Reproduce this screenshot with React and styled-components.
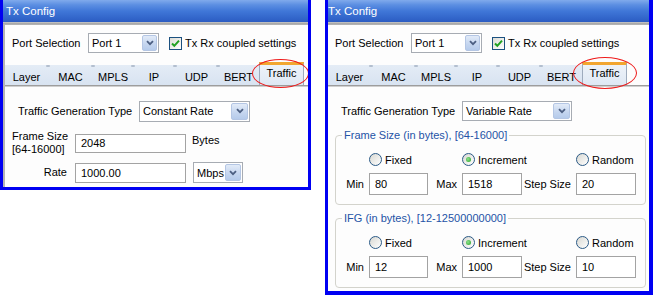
import React from 'react'
import styled, { createGlobalStyle } from 'styled-components'

const GlobalStyle = createGlobalStyle`
  html, body {
    margin: 0;
    padding: 0;
    background: #ffffff;
  }
  body {
    font-family: "Liberation Sans", Arial, sans-serif;
    font-size: 11px;
    color: #000;
  }
`

const Page = styled.div`
  display: flex;
  align-items: flex-start;
  gap: 14px;
  width: 653px;
  height: 296px;
  overflow: hidden;
`

const Window = styled.div`
  box-sizing: border-box;
  flex: none;
  width: ${p => p.$w}px;
  height: ${p => p.$h}px;
  border: 3px solid #0000f2;
  border-top: 0;
  border-right-width: ${p => p.$right}px;
  border-bottom-width: ${p => p.$bottom}px;
  display: flex;
  flex-direction: column;
  background: #fdfdfd;
  overflow: hidden;
`

const TitleBar = styled.div`
  flex: none;
  height: 22px;
  display: flex;
  align-items: center;
  padding-left: ${p => p.$pad}px;
  color: #ffffff;
  font-size: 11.5px;
  background: linear-gradient(#80aaec 0%, #5c8fe2 22%, #4077d8 50%, #3468cc 78%, #2b5cc2 100%);
`

const Separator = styled.div`
  flex: none;
  height: 3px;
  background: linear-gradient(#c9c9c9, #a3a3a3 60%, #bdbdbd);
`

const Body = styled.div`
  flex: 1;
  display: flex;
  flex-direction: column;
  padding-top: 8px;
  border-left: ${p => p.$gutter}px solid #b4b4b4;
`

const PortRow = styled.div`
  display: flex;
  align-items: center;
  height: 20px;
  padding-left: 7px;
`

const PortLabel = styled.span`
  width: 76px;
  flex: none;
`

const SelectBox = styled.div`
  box-sizing: border-box;
  flex: none;
  width: ${p => p.$w}px;
  height: ${p => p.$h}px;
  margin-left: ${p => p.$ml || 0}px;
  border: 1px solid #a7acb3;
  background: #ffffff;
  display: flex;
  padding: 1px;
`

const SelectText = styled.span`
  flex: 1;
  display: flex;
  align-items: center;
  padding-left: 2px;
  white-space: nowrap;
  overflow: hidden;
`

const DropButton = styled.span`
  box-sizing: border-box;
  flex: none;
  width: ${p => p.$w}px;
  display: flex;
  align-items: center;
  justify-content: center;
  background: linear-gradient(#e2ebf8, #c4d5ef 60%, #b5cbeb);
  border: 1px solid #b4c6e4;
  border-radius: 2px;
`

const CheckWrap = styled.label`
  display: flex;
  align-items: center;
  gap: 3px;
  margin-left: 10px;
`

const CheckBox = styled.span`
  box-sizing: border-box;
  width: 13px;
  height: 13px;
  border: 1px solid #1c5180;
  background: linear-gradient(135deg, #dcdcd5, #ffffff);
  display: flex;
  align-items: center;
  justify-content: center;
`

const TabStrip = styled.div`
  position: relative;
  display: flex;
  align-items: flex-end;
  height: 23px;
  margin-top: 9px;
  border-bottom: 1px solid #9d9d9d;
  box-shadow: 0 1px 0 #cfcfcf;
`

const Tab = styled.div`
  position: relative;
  box-sizing: border-box;
  flex: none;
  width: ${p => p.$w}px;
  height: ${p => (p.$active ? 23 : 20)}px;
  display: flex;
  align-items: center;
  justify-content: center;
  padding-top: ${p => (p.$active ? 0 : 4)}px;
  padding-bottom: ${p => (p.$active ? 4 : 0)}px;
  background: ${p =>
    p.$active
      ? 'linear-gradient(#edf2f9, #dfe8f4)'
      : 'linear-gradient(#e4ecf6, #d8e3f1)'};
  border-top: ${p => (p.$active ? '3px solid #f2a630' : '0')};
  border-left: ${p => (p.$active ? '1px solid #9eabbd' : '0')};
  border-right: ${p => (p.$active ? '1px solid #9eabbd' : '0')};

  &::before {
    content: '';
    display: ${p => (p.$notch ? 'block' : 'none')};
    position: absolute;
    left: -2px;
    top: 0;
    width: 4px;
    height: 2px;
    border-radius: 1px;
    background: #b3bfcf;
  }
`

const Ring = styled.div`
  position: absolute;
  left: ${p => p.$x}px;
  top: ${p => p.$y}px;
  width: ${p => p.$w}px;
  height: ${p => p.$h}px;
  box-sizing: border-box;
  border: 1px solid #ee1b1b;
  border-radius: 50%;
  pointer-events: none;
`

const TypeRow = styled.div`
  display: flex;
  align-items: center;
  height: 20px;
  margin-top: 15px;
  padding-left: 13px;
`

const TypeLabel = styled.span`
  width: 121px;
  flex: none;
`

const FormGrid = styled.div`
  display: grid;
  grid-template-columns: 63px 111px auto;
  row-gap: 6px;
  margin-top: 9px;
  padding-left: 7px;
  align-items: center;
`

const FieldLabel = styled.span`
  line-height: 13px;
  text-align: ${p => p.$align || 'left'};
  padding-right: ${p => (p.$align === 'right' ? 8 : 0)}px;
`

const Unit = styled.span`
  align-self: start;
  margin-top: 4px;
  margin-left: 6px;
`

const TextField = styled.input`
  box-sizing: border-box;
  width: ${p => (p.$w ? `${p.$w}px` : '100%')};
  height: ${p => p.$h}px;
  margin: 0;
  padding: 0 0 0 5px;
  border: 1px solid #a3a3a3;
  background: #ffffff;
  font: inherit;
  color: #000;
  outline: none;
`

const Group = styled.fieldset`
  margin: ${p => p.$mt}px 3px 0 7px;
  padding: 0 0 9px 0;
  border: 1px solid #d3d3cc;
  border-radius: 4px;
  min-inline-size: 0;
`

const Legend = styled.legend`
  margin-left: 6px;
  padding: 0 2px;
  line-height: 13px;
  color: #2453a6;
`

const OptionGrid = styled.div`
  display: grid;
  grid-template-columns: 33px 59px 34px 60px 54px 60px;
  align-items: center;
  margin-top: ${p => p.$mt}px;
`

const Option = styled.label`
  grid-column: ${p => p.$col};
  display: flex;
  align-items: center;
  gap: 3px;
  height: 13px;
  white-space: nowrap;
`

const RadioDot = styled.span`
  position: relative;
  box-sizing: border-box;
  flex: none;
  width: 13px;
  height: 13px;
  border-radius: 50%;
  border: 1px solid #2b5a86;
  background: linear-gradient(135deg, #d8d8d2, #ffffff);

  &::after {
    content: '';
    display: ${p => (p.$on ? 'block' : 'none')};
    position: absolute;
    left: 3px;
    top: 3px;
    width: 5px;
    height: 5px;
    border-radius: 50%;
    background: radial-gradient(circle at 40% 40%, #8ee28e, #22a022);
  }
`

const GridLabel = styled.span`
  text-align: right;
  padding-right: 5px;
  white-space: nowrap;
`

const Chevron = () => (
  <svg width="8" height="6" viewBox="0 0 8 6">
    <path d="M1 1.2 L4 4.2 L7 1.2" fill="none" stroke="#4c5f82" strokeWidth="1.8" />
  </svg>
)

const Select = ({ value, w, h, btn = 15, ml }) => (
  <SelectBox $w={w} $h={h} $ml={ml}>
    <SelectText>{value}</SelectText>
    <DropButton $w={btn}>
      <Chevron />
    </DropButton>
  </SelectBox>
)

const tabs = [
  ['Layer', 43],
  ['MAC', 45],
  ['MPLS', 40],
  ['IP', 42],
  ['UDP', 43],
  ['BERT', 41],
  ['Traffic', 45],
]

const Header = ({ ring }) => (
  <>
    <PortRow>
      <PortLabel>Port Selection</PortLabel>
      <Select value="Port 1" w={71} h={20} />
      <CheckWrap>
        <CheckBox>
          <svg width="11" height="11" viewBox="0 0 11 11">
            <path d="M2 5.5 L4.3 7.8 L9 2.6" fill="none" stroke="#21a121" strokeWidth="2" />
          </svg>
        </CheckBox>
        Tx Rx coupled settings
      </CheckWrap>
    </PortRow>
    <TabStrip>
      {tabs.map(([name, w], i) => (
        <Tab key={name} $w={w} $active={name === 'Traffic'} $notch={i > 0 && i < 6}>
          {name}
        </Tab>
      ))}
      <Ring $x={ring.x} $y={ring.y} $w={ring.w} $h={ring.h} />
    </TabStrip>
  </>
)

const RangeGroup = ({ title, min, max, step, mt }) => (
  <Group $mt={mt}>
    <Legend>{title}</Legend>
    <OptionGrid $mt={11}>
      <Option $col={2}><RadioDot />Fixed</Option>
      <Option $col={4}><RadioDot $on />Increment</Option>
      <Option $col={6}><RadioDot />Random</Option>
    </OptionGrid>
    <OptionGrid $mt={7}>
      <GridLabel>Min</GridLabel>
      <TextField $h={22} value={min} readOnly />
      <GridLabel>Max</GridLabel>
      <TextField $h={22} value={max} readOnly />
      <GridLabel>Step Size</GridLabel>
      <TextField $h={22} value={step} readOnly />
    </OptionGrid>
  </Group>
)

export default function App() {
  return (
    <>
      <GlobalStyle />
      <Page>
        <Window $w={311} $h={190} $right={3} $bottom={3}>
          <TitleBar $pad={3}>Tx Config</TitleBar>
          <Separator />
          <Body $gutter={2}>
            <Header ring={{ x: 247, y: -3, w: 57, h: 29 }} />
            <TypeRow>
              <TypeLabel>Traffic Generation Type</TypeLabel>
              <Select value="Constant Rate" w={111} h={21} btn={17} />
            </TypeRow>
            <FormGrid>
              <FieldLabel>
                Frame Size
                <br />
                [64-16000]
              </FieldLabel>
              <TextField $h={19} value="2048" readOnly />
              <Unit>Bytes</Unit>
              <FieldLabel $align="right">Rate</FieldLabel>
              <TextField $h={20} value="1000.00" readOnly />
              <Select value="Mbps" w={50} h={21} btn={16} ml={7} />
            </FormGrid>
          </Body>
        </Window>

        <Window $w={328} $h={295} $right={4} $bottom={4}>
          <TitleBar $pad={0}>Tx Config</TitleBar>
          <Separator />
          <Body $gutter={0}>
            <Header ring={{ x: 245, y: -5, w: 64, h: 32 }} />
            <TypeRow>
              <TypeLabel>Traffic Generation Type</TypeLabel>
              <Select value="Variable Rate" w={110} h={20} btn={17} />
            </TypeRow>
            <RangeGroup title="Frame Size (in bytes), [64-16000]" min="80" max="1518" step="20" mt={8} />
            <RangeGroup title="IFG (in bytes), [12-12500000000]" min="12" max="1000" step="10" mt={7} />
          </Body>
        </Window>
      </Page>
    </>
  )
}
